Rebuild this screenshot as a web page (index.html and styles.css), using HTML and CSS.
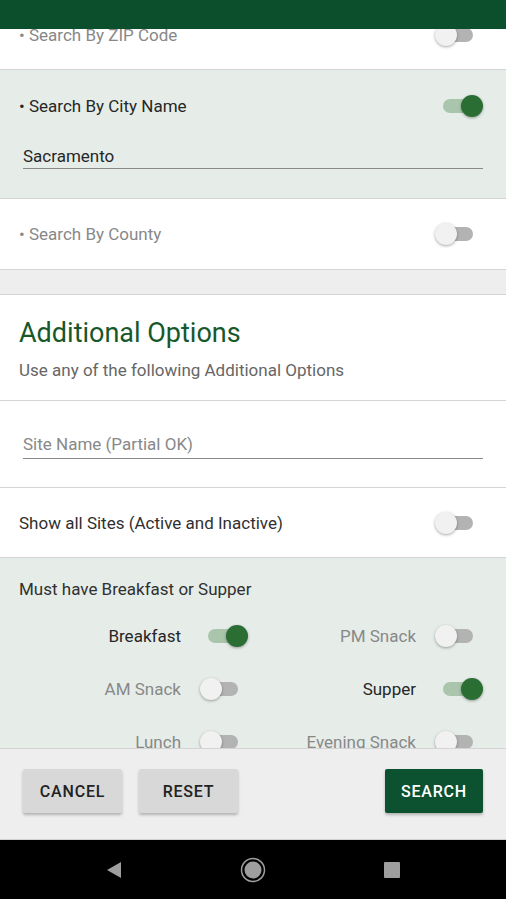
FILE: index.html
```html
<!DOCTYPE html>
<html lang="en">
<head>
  <meta charset="UTF-8">
  <meta name="viewport" content="width=device-width, initial-scale=1.0">
  <title>Site Search</title>
  <link rel="stylesheet" href="styles.css">
</head>
<body>
  <div class="screen">
    <header class="appbar"></header>

    <main class="scroll">
      <div class="content">
        <!-- Search modes -->
        <section class="option-row">
          <span class="label muted">• Search By ZIP Code</span>
          <span class="switch"><span class="track"></span><span class="thumb"></span></span>
        </section>

        <section class="city tinted">
          <div class="option-row plain">
            <span class="label">• Search By City Name</span>
            <span class="switch on"><span class="track"></span><span class="thumb"></span></span>
          </div>
          <div class="field">Sacramento</div>
        </section>

        <section class="option-row tall">
          <span class="label muted">• Search By County</span>
          <span class="switch"><span class="track"></span><span class="thumb"></span></span>
        </section>

        <div class="gap"></div>

        <!-- Additional options -->
        <section class="intro">
          <h2>Additional Options</h2>
          <p>Use any of the following Additional Options</p>
        </section>

        <section class="site-name">
          <div class="field placeholder">Site Name (Partial OK)</div>
        </section>

        <section class="option-row">
          <span class="label dark">Show all Sites (Active and Inactive)</span>
          <span class="switch"><span class="track"></span><span class="thumb"></span></span>
        </section>

        <section class="meals tinted">
          <div class="meals-title">Must have Breakfast or Supper</div>
          <div class="meal-grid">
            <div class="meal">
              <span class="label">Breakfast</span>
              <span class="switch on"><span class="track"></span><span class="thumb"></span></span>
            </div>
            <div class="meal">
              <span class="label muted">PM Snack</span>
              <span class="switch"><span class="track"></span><span class="thumb"></span></span>
            </div>
            <div class="meal">
              <span class="label muted">AM Snack</span>
              <span class="switch"><span class="track"></span><span class="thumb"></span></span>
            </div>
            <div class="meal">
              <span class="label">Supper</span>
              <span class="switch on"><span class="track"></span><span class="thumb"></span></span>
            </div>
            <div class="meal">
              <span class="label muted">Lunch</span>
              <span class="switch"><span class="track"></span><span class="thumb"></span></span>
            </div>
            <div class="meal">
              <span class="label muted">Evening Snack</span>
              <span class="switch"><span class="track"></span><span class="thumb"></span></span>
            </div>
          </div>
        </section>
      </div>
    </main>

    <footer class="actions">
      <button class="btn">Cancel</button>
      <button class="btn">Reset</button>
      <button class="btn primary">Search</button>
    </footer>

    <nav class="sysnav">
      <span class="nav-icon">
        <svg width="18" height="18" viewBox="0 0 18 18"><polygon points="16,1 16,17 2,9" fill="#9e9e9e"/></svg>
      </span>
      <span class="nav-icon">
        <svg width="26" height="26" viewBox="0 0 26 26"><circle cx="13" cy="13" r="11.5" fill="none" stroke="#9e9e9e" stroke-width="1.5"/><circle cx="13" cy="13" r="8.5" fill="#9e9e9e"/></svg>
      </span>
      <span class="nav-icon">
        <svg width="16" height="16" viewBox="0 0 16 16"><rect x="0" y="0" width="16" height="16" rx="1" fill="#9e9e9e"/></svg>
      </span>
    </nav>
  </div>
</body>
</html>
```

FILE: styles.css
```css
/* General */
body {
  margin: 0;
  font-family: Roboto, "Noto Sans", sans-serif;
  background: #000;
}

.screen {
  width: 506px;
  height: 900px;
  display: flex;
  flex-direction: column;
  background: #fff;
  overflow: hidden;
}

.appbar {
  height: 29px;
  flex-shrink: 0;
  background: #0c4f2d;
  position: relative;
  z-index: 2;
}

/* Scrolling form */
.scroll {
  height: 719px;
  flex-shrink: 0;
  overflow: hidden;
}

.content {
  margin-top: -29px;
}

section {
  border-bottom: 1px solid #d4d4d4;
  background: #fff;
}

.tinted {
  background: #e6ede8;
}

.option-row {
  height: 69px;
  padding: 0 23px 0 19px;
  display: flex;
  align-items: center;
  justify-content: space-between;
}

.option-row.tall {
  height: 70px;
}

.option-row.plain {
  height: 72px;
  border: none;
}

.label {
  font-size: 17px;
  line-height: 24px;
  color: #262626;
}

.label.muted {
  color: #888;
}

.label.dark {
  color: #303030;
}

/* Text fields */
.field {
  margin: 0 23px;
  padding: 2px 0 0;
  font-size: 17px;
  line-height: 24px;
  color: #262626;
  border-bottom: 1px solid #8a8a8a;
}

.field.placeholder {
  color: #888;
  padding: 0 0 2px;
}

.city {
  height: 128px;
}

.gap {
  height: 24px;
  background: #eeeeee;
  border-bottom: 1px solid #d4d4d4;
}

.intro {
  height: 106px;
  padding: 21px 19px 0;
  box-sizing: border-box;
}

.intro h2 {
  margin: 0;
  font-size: 27px;
  line-height: 34px;
  font-weight: 400;
  color: #17582a;
}

.intro p {
  margin: 10px 0 0;
  font-size: 17px;
  line-height: 20px;
  color: #666;
}

.site-name {
  height: 87px;
  padding-top: 31px;
  box-sizing: border-box;
}

/* Meal switches */
.meals {
  padding-top: 19px;
  border: none;
}

.meals-title {
  padding-left: 19px;
  font-size: 17px;
  line-height: 24px;
  color: #303030;
  margin-bottom: 8px;
}

.meal-grid {
  display: grid;
  grid-template-columns: 235px 235px;
  grid-auto-rows: 53px;
  justify-content: end;
  padding-right: 23px;
}

.meal {
  display: flex;
  align-items: center;
  justify-content: flex-end;
  gap: 19px;
}

/* Switch */
.switch {
  position: relative;
  width: 48px;
  height: 24px;
  flex-shrink: 0;
}

.switch .track {
  position: absolute;
  left: 8px;
  top: 5px;
  width: 30px;
  height: 14px;
  border-radius: 7px;
  background: #b3b3b3;
}

.switch .thumb {
  position: absolute;
  left: 0;
  top: 1px;
  width: 22px;
  height: 22px;
  border-radius: 50%;
  background: #f1f1f1;
  box-shadow: 0 1px 3px rgba(0, 0, 0, 0.35);
}

.switch.on .track {
  background: #a9c6ad;
}

.switch.on .thumb {
  left: 26px;
  background: #2b6e34;
}

/* Bottom actions */
.actions {
  height: 91px;
  flex-shrink: 0;
  box-sizing: border-box;
  border-top: 1px solid #d4d4d4;
  background: #eeeeee;
  padding: 20px 23px 0;
  display: flex;
  align-items: flex-start;
  gap: 17px;
  position: relative;
  z-index: 1;
}

.btn {
  width: 99px;
  height: 44px;
  border: none;
  border-radius: 2px;
  background: #d8d8d8;
  color: #222;
  font-family: Roboto, "Noto Sans", sans-serif;
  font-size: 16px;
  font-weight: 500;
  letter-spacing: 0.8px;
  text-transform: uppercase;
  box-shadow: 0 2px 3px rgba(0, 0, 0, 0.25);
}

.btn.primary {
  margin-left: auto;
  width: 98px;
  background: #0c5130;
  color: #fff;
}

/* System navigation */
.sysnav {
  height: 60px;
  flex-shrink: 0;
  box-sizing: border-box;
  border-top: 1px solid #d0d0d0;
  background: #000;
  display: flex;
  align-items: center;
  justify-content: center;
  gap: 99px;
}

.nav-icon {
  width: 40px;
  height: 40px;
  display: flex;
  align-items: center;
  justify-content: center;
}
```
